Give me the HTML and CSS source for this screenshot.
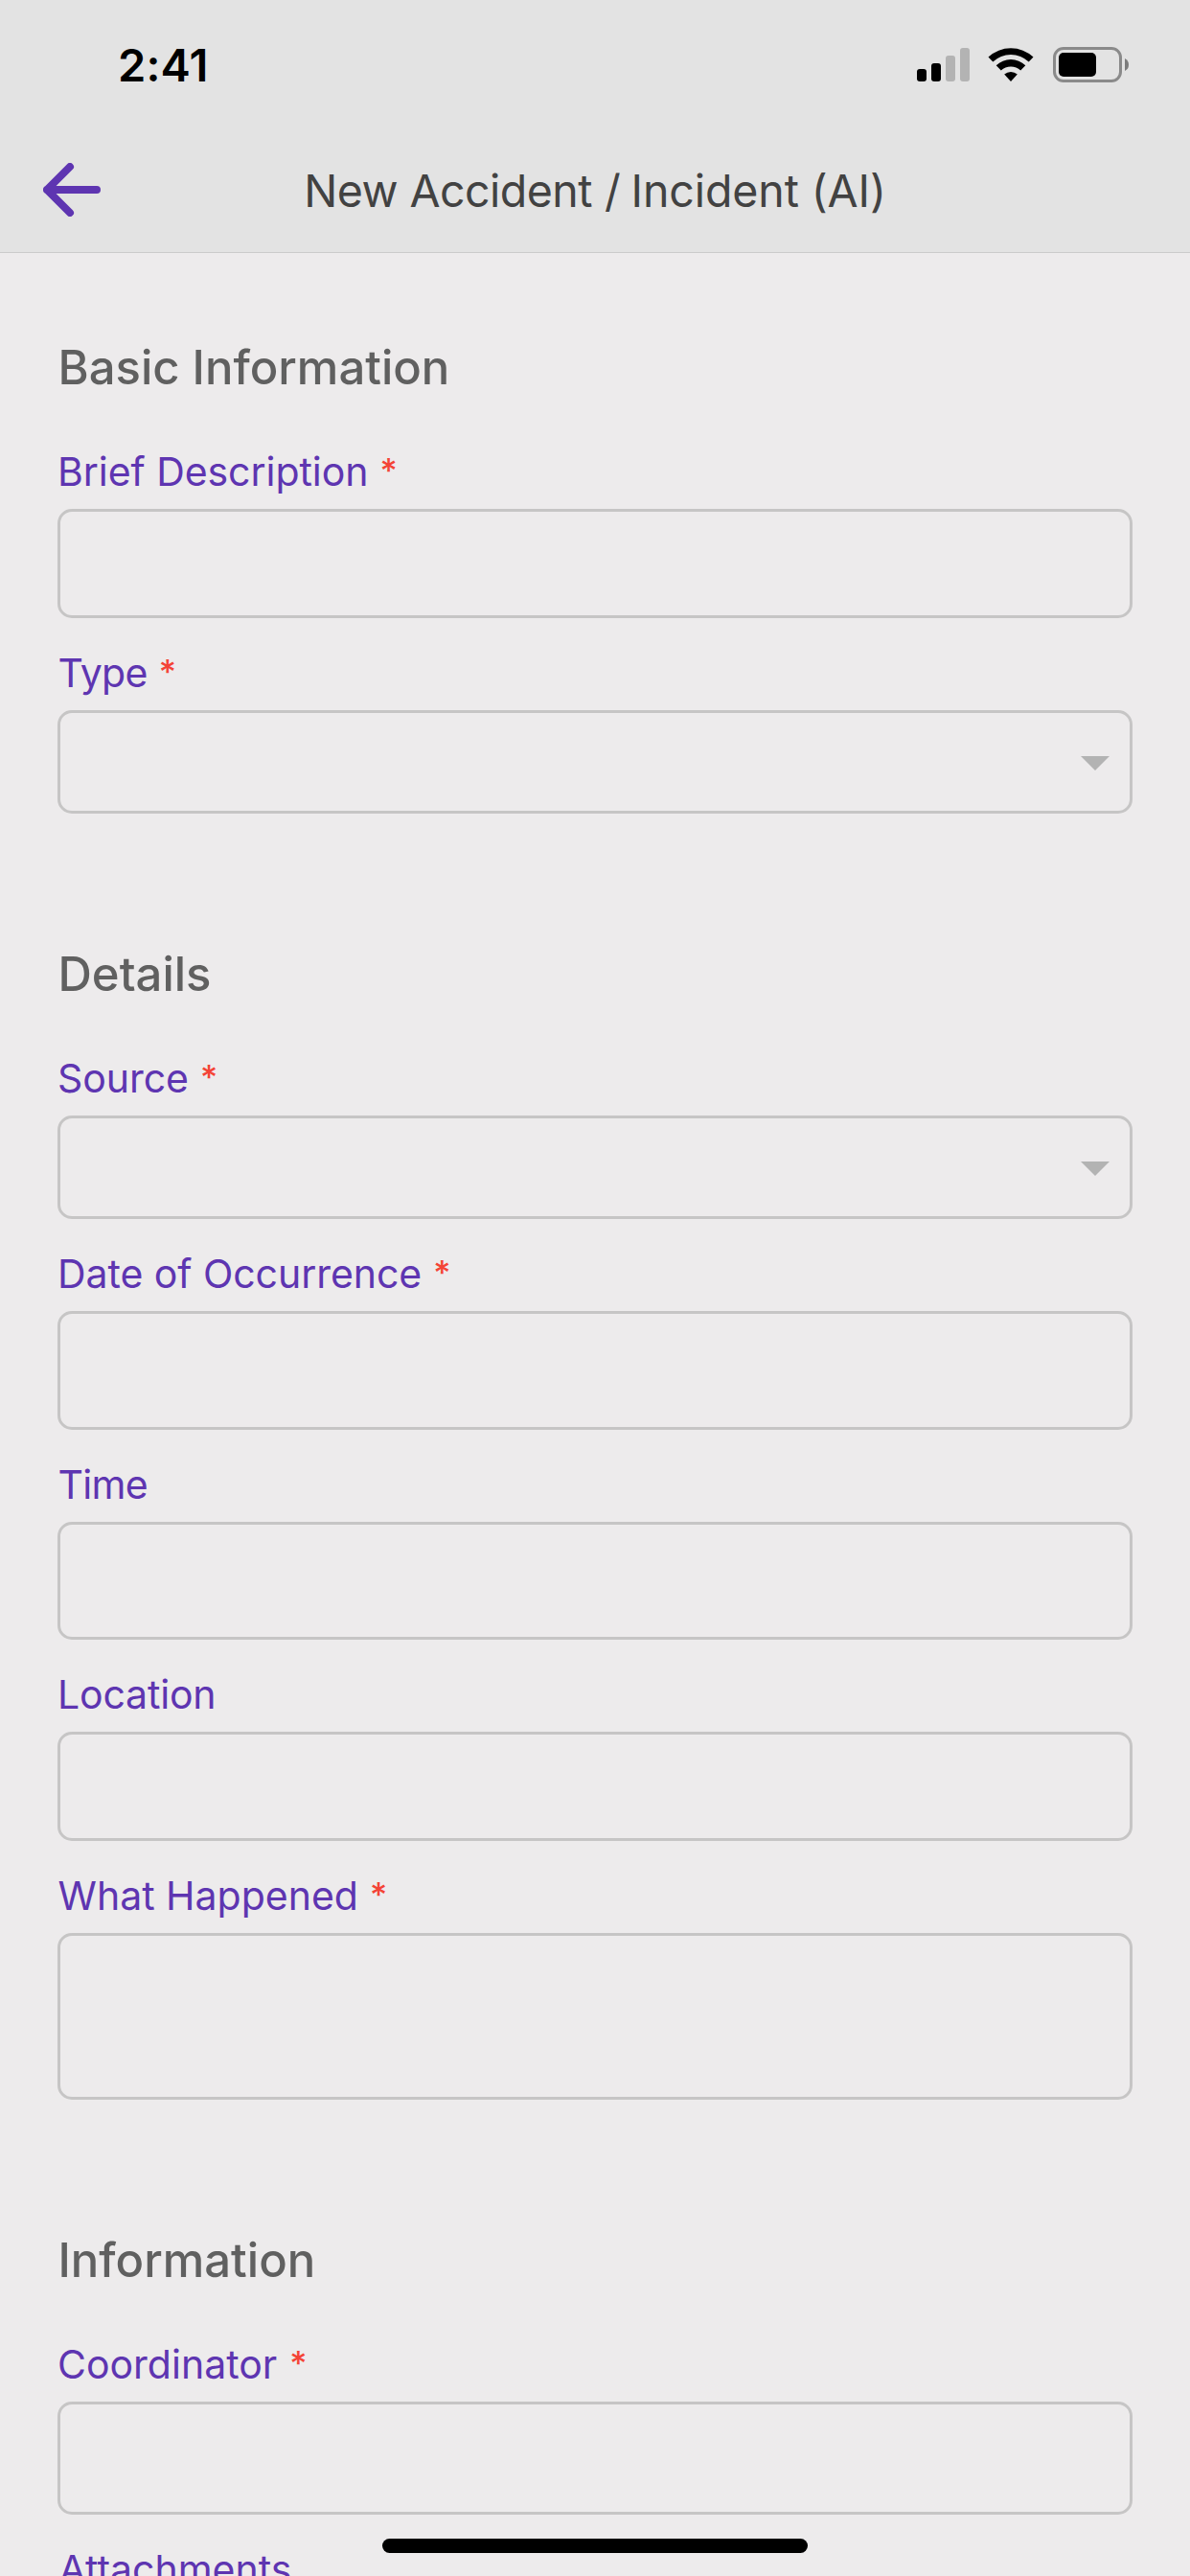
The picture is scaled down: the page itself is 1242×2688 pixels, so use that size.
FILE: index.html
```html
<!DOCTYPE html>
<html lang="en">
<head>
<meta charset="utf-8">
<title>New Accident / Incident (AI)</title>
<link rel="stylesheet" href="styles.css">
</head>
<body>
<div class="screen">
  <header class="header">
    <div class="status">
      <span class="time">2:41</span>
      <div class="status-icons">
        <svg class="signal" width="55" height="37" viewBox="0 0 55 37"><rect x="0" y="23" width="10" height="13" rx="3"/><rect x="15" y="17" width="10" height="19" rx="3"/><g fill="#b3b3b3"><rect x="30" y="9" width="10" height="27" rx="3"/><rect x="45" y="1" width="10" height="35" rx="3"/></g></svg>
        <svg class="wifi" width="48" height="37" viewBox="0 0 48 37"><path d="M0.500 10.500A34.500 34.500 0 0 1 47.500 10.500L42.700 15.600A27 27 0 0 0 5.300 15.600Z"/><path d="M8.700 19.300A22 22 0 0 1 39.300 19.300L34.200 24.500A14.800 14.800 0 0 0 13.800 24.500Z"/><path d="M17.200 28.600A10.500 10.500 0 0 1 30.800 28.600L24 36Z"/></svg>
        <svg class="battery" width="80" height="37" viewBox="0 0 80 37"><rect x="1.500" y="1.500" width="69" height="34" rx="9.500" fill="none" stroke="#8a8a8a" stroke-width="3"/><rect x="6" y="6" width="39" height="25" rx="5"/><path d="M75 12Q79 14 79 18.500T75 25Z" fill="#7c7c7c"/></svg>
      </div>
    </div>
    <div class="nav">
      <svg class="back" width="60" height="56" viewBox="0 0 60 56"><path d="M28 4L4 28L28 52M4 28H56"/></svg>
      <h1 class="title"><span class="title-first">New Accident <span class="slash">/</span></span> Incident (AI)</h1>
    </div>
  </header>
  <main class="form">
    <section class="section">
      <h2 class="heading">Basic Information</h2>
      <div class="label">Brief Description<span class="req">*</span></div>
      <div class="input"></div>
      <div class="label label-t">Type<span class="req">*</span></div>
      <div class="input select"><i class="caret"></i></div>
    </section>
    <section class="section">
      <h2 class="heading">Details</h2>
      <div class="label">Source<span class="req">*</span></div>
      <div class="input select"><i class="caret"></i></div>
      <div class="label">Date of Occurrence<span class="req">*</span></div>
      <div class="input date"></div>
      <div class="label label-t">Time</div>
      <div class="input clock"></div>
      <div class="label label-l">Location</div>
      <div class="input"></div>
      <div class="label label-w">What Happened<span class="req">*</span></div>
      <div class="input area"></div>
    </section>
    <section class="section">
      <h2 class="heading">Information</h2>
      <div class="label label-c">Coordinator<span class="req">*</span></div>
      <div class="input person"></div>
      <div class="label label-a">Attachments</div>
    </section>
  </main>
  <div class="home-bar"></div>
</div>
</body>
</html>
```
FILE: styles.css
```css
* { box-sizing: border-box; }
body {
  margin: 0;
  background: #edebec;
  font-family: Inter, "Liberation Sans", sans-serif;
}
.screen {
  position: relative;
  height: 2688px;
  overflow: hidden;
}
.header {
  height: 264px;
  background: #e3e3e3;
  border-bottom: 1px solid #cbcbcb;
}
.status {
  display: flex;
  justify-content: space-between;
  height: 132px;
  padding: 49px 63px 0 123px;
}
.time {
  font-size: 47px;
  font-weight: 600;
  line-height: 38px;
  letter-spacing: 0.14px;
  color: #000;
}
.status-icons { display: flex; align-items: flex-start; }
.wifi { margin-left: 19px; }
.battery { margin-left: 20px; }
.nav {
  display: flex;
  align-items: center;
  height: 131px;
  padding: 1px 45px 0;
}
.back {
  fill: none;
  stroke: #5e35b1;
  stroke-width: 8;
  stroke-linecap: round;
  stroke-linejoin: round;
}
.title {
  flex: 1;
  margin: 0 60px 0 0;
  padding-top: 2px;
  font-size: 46.5px;
  font-weight: 400;
  line-height: 60px;
  letter-spacing: -0.1px;
  text-align: center;
  white-space: nowrap;
  color: #424242;
}
.title-first { letter-spacing: -0.54px; }
.slash { margin: 0 -1.8px 0 0.7px; }
.form { padding: 90px 60px 0; }
.section + .section { padding-top: 138px; }
.heading {
  margin: 0 0 21px;
  padding-left: 0.5px;
  font-size: 49px;
  font-weight: 500;
  line-height: 60px;
  color: #606060;
}
.label {
  display: flex;
  height: 96px;
  padding-top: 27px;
  font-size: 41px;
  line-height: 60px;
  letter-spacing: -0.05px;
  color: #5e35b1;
}
.label-t { padding-left: 0.5px; letter-spacing: -0.68px; }
.label-l { letter-spacing: -0.18px; }
.label-w { padding-left: 0.5px; letter-spacing: 0; }
.label-c { letter-spacing: 0; }
.label-a { padding-left: 1.5px; letter-spacing: 0; }
.req {
  margin: -1px 0 0 12px;
  font-size: 35px;
  font-weight: 500;
  color: #f44336;
}
.label-c .req { margin-left: 13px; }
.input {
  display: flex;
  justify-content: flex-end;
  height: 114px;
  border: 3px solid #c6c5c5;
  border-radius: 15px;
}
.select { height: 108px; padding: 45px 21px 0 0; }
.date { height: 124px; }
.clock { height: 123px; }
.area { height: 174px; }
.person { height: 118px; }
.caret {
  width: 30px;
  height: 15px;
  background: #b3b3b3;
  clip-path: polygon(0 0, 100% 0, 50% 100%);
}
.home-bar {
  position: absolute;
  left: 399px;
  bottom: 24px;
  width: 444px;
  height: 15px;
  border-radius: 8px;
  background: #000;
}
```
